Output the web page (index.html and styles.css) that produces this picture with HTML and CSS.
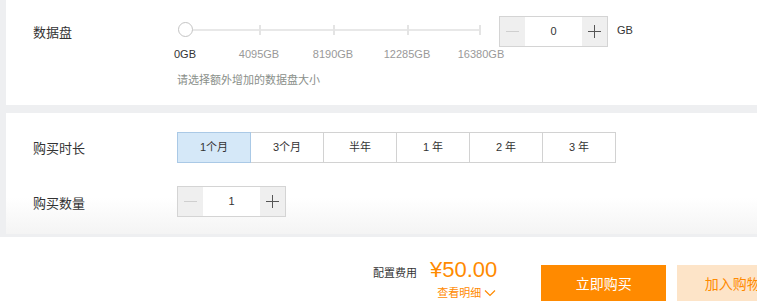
FILE: index.html
```html
<!DOCTYPE html>
<html lang="zh">
<head>
<meta charset="utf-8">
<title>配置</title>
<link rel="stylesheet" href="styles.css">
</head>
<body>
<div class="page">
  <div class="cards">
    <section class="card card-disk">
      <div class="row">
        <div class="label">数据盘</div>
        <div class="control">
          <div class="disk-line">
            <div class="slider">
              <div class="track">
                <span class="tick t1"></span>
                <span class="tick t2"></span>
                <span class="tick t3"></span>
                <span class="tick t4"></span>
                <span class="knob"></span>
              </div>
            </div>
            <div class="stepper">
              <span class="step minus disabled"><i class="h"></i></span>
              <span class="val">0</span>
              <span class="step plus"><i class="h"></i><i class="v"></i></span>
            </div>
            <span class="unit">GB</span>
          </div>
          <div class="scale">
            <span class="first">0GB</span>
            <span>4095GB</span>
            <span>8190GB</span>
            <span>12285GB</span>
            <span>16380GB</span>
          </div>
          <div class="hint">请选择额外增加的数据盘大小</div>
        </div>
      </div>
    </section>
    <section class="card card-buy">
      <div class="row row-period">
        <div class="label">购买时长</div>
        <div class="control">
          <div class="periods">
            <span class="period active">1个月</span>
            <span class="period">3个月</span>
            <span class="period">半年</span>
            <span class="period">1 年</span>
            <span class="period">2 年</span>
            <span class="period">3 年</span>
          </div>
        </div>
      </div>
      <div class="row row-qty">
        <div class="label">购买数量</div>
        <div class="control">
          <div class="stepper">
            <span class="step minus disabled"><i class="h"></i></span>
            <span class="val">1</span>
            <span class="step plus"><i class="h"></i><i class="v"></i></span>
          </div>
        </div>
      </div>
    </section>
  </div>
  <footer class="footer">
    <span class="fee-label">配置费用</span>
    <div class="price-block">
      <div class="price">¥50.00</div>
      <a class="detail">查看明细 <svg width="12" height="8" viewBox="0 0 12 8"><polyline points="1,1.5 6,6.5 11,1.5" fill="none" stroke="#ff8a00" stroke-width="1.2"/></svg></a>
    </div>
    <button class="btn btn-buy">立即购买</button>
    <button class="btn btn-cart">加入购物车</button>
  </footer>
</div>
</body>
</html>
```

FILE: styles.css
```css
* { box-sizing: border-box; }
html, body {
  margin: 0;
  padding: 0;
  width: 757px;
  height: 307px;
  overflow: hidden;
  background: #ffffff;
  font-family: "Liberation Sans", "Noto Sans CJK SC", sans-serif;
  color: #333;
}
.page { width: 757px; }
.cards {
  background: #eeeff1;
  padding-left: 6px;
  padding-bottom: 3px;
}
.card {
  background: #fff;
  width: 820px;
}
.card-disk {
  height: 105px;
  padding-top: 16px;
  margin-bottom: 8px;
}
.card-buy {
  height: 121px;
  padding-top: 19px;
  background: linear-gradient(to bottom, #fff 0, #fff 70%, #f4f4f4 100%);
}
.row {
  display: flex;
  padding-left: 27px;
}
.label {
  width: 144px;
  font-size: 13px;
  line-height: 30px;
  padding-top: 2px;
  color: #333;
}
.control { display: flex; flex-direction: column; }

.disk-line { display: flex; align-items: center; height: 30px; }
.slider { width: 322px; height: 30px; display: flex; align-items: center; }
.track {
  position: relative;
  margin-left: 8px;
  width: 296px;
  height: 2px;
  background: #e8e8e8;
  margin-top: -2px;
}
.tick {
  position: absolute;
  top: -4px;
  width: 2px;
  height: 10px;
  background: #e4e4e4;
}
.t1 { left: 74px; }
.t2 { left: 148px; }
.t3 { left: 222px; }
.t4 { left: 294px; }
.knob {
  position: absolute;
  left: -7px;
  top: -7px;
  width: 15px;
  height: 15px;
  border-radius: 50%;
  background: #fff;
  border: 1px solid #c4c4c4;
}

.stepper {
  display: flex;
  width: 109px;
  height: 31px;
  border: 1px solid #d4d4d4;
  background: #fff;
}
.step {
  width: 25px;
  background: #efefef;
  display: flex;
  align-items: center;
  justify-content: center;
  position: relative;
}
.step .h { display: block; width: 13px; height: 1px; background: #555; }
.step .v { position: absolute; width: 1px; height: 13px; background: #555; left: 12px; top: 8px; }
.step.disabled .h { background: #cfcfcf; }
.val {
  flex: 1;
  text-align: center;
  font-size: 11px;
  line-height: 29px;
  color: #333;
}
.unit { font-size: 11px; margin-left: 9px; color: #333; margin-top: -2px; }

.scale {
  display: flex;
  margin-left: -29px;
  margin-top: 1px;
  height: 14px;
}
.scale span {
  width: 74px;
  text-align: center;
  font-size: 11px;
  line-height: 14px;
  color: #999;
}
.scale span.first { color: #333; }
.hint {
  margin-top: 12px;
  font-size: 11px;
  line-height: 14px;
  color: #8a8f8a;
}

.periods { display: flex; }
.period {
  width: 74px;
  height: 31px;
  border: 1px solid #d2d2d2;
  margin-left: -1px;
  font-size: 11px;
  line-height: 29px;
  text-align: center;
  color: #333;
  background: #fff;
}
.period:first-child { margin-left: 0; }
.period.active {
  background: #d5e8f8;
  border-color: #aac9e6;
  position: relative;
}
.row-qty { margin-top: 22px; }
.row-qty .label { line-height: 30px; padding-top: 3px; }

.footer {
  height: 70px;
  background: #fff;
  display: flex;
  align-items: flex-start;
  padding-left: 373px;
  white-space: nowrap;
}
.fee-label {
  margin-top: 30px;
  font-size: 11px;
  line-height: 12px;
  color: #333;
}
.price-block {
  margin-left: 13px;
  margin-top: 20px;
  display: flex;
  flex-direction: column;
  align-items: center;
}
.price {
  font-size: 22px;
  line-height: 26px;
  color: #ff8a00;
}
.detail {
  margin-top: 3px;
  font-size: 11px;
  line-height: 14px;
  color: #ff8a00;
  padding-left: 6px;
  display: flex;
  align-items: center;
  gap: 3px;
}
.btn {
  flex: none;
  margin-top: 28px;
  width: 125px;
  height: 36px;
  border: 0;
  font-family: "Liberation Sans", "Noto Sans CJK SC", sans-serif;
  font-size: 14px;
  padding: 0;
}
.btn-buy {
  margin-left: 44px;
  background: #ff8a00;
  color: #fff;
}
.btn-cart {
  margin-left: 11px;
  background: #fde4c8;
  color: #ff8a00;
}
```
